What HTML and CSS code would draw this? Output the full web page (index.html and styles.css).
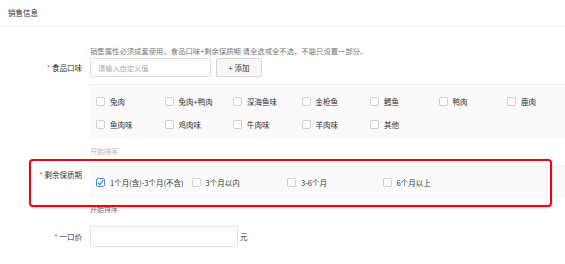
FILE: index.html
```html
<!DOCTYPE html>
<html>
<head>
    <title>销售信息</title>
    <link rel="stylesheet" href="styles.css">
</head>
<body>

<div class="page">
    <div class="section-title">销售信息</div>

    <div class="form">
        <div class="tip">销售属性必须成套使用，食品口味+剩余保质期 请全选或全不选，不能只设置一部分。</div>

        <div class="form-row row-flavor">
            <div class="label"><span class="req">*</span> 食品口味</div>
            <div class="field">
                <input class="text-input custom-input" type="text" placeholder="请输入自定义值">
                <button class="add-button" type="button">+ 添加</button>
            </div>
        </div>

        <div class="option-panel flavor-panel">
            <label class="check"><span class="box"></span>兔肉</label>
            <label class="check"><span class="box"></span>兔肉+鸭肉</label>
            <label class="check"><span class="box"></span>深海鱼味</label>
            <label class="check"><span class="box"></span>金枪鱼</label>
            <label class="check"><span class="box"></span>鳕鱼</label>
            <label class="check"><span class="box"></span>鸭肉</label>
            <label class="check"><span class="box"></span>鹿肉</label>
            <label class="check"><span class="box"></span>鱼肉味</label>
            <label class="check"><span class="box"></span>鸡肉味</label>
            <label class="check"><span class="box"></span>牛肉味</label>
            <label class="check"><span class="box"></span>羊肉味</label>
            <label class="check"><span class="box"></span>其他</label>
        </div>

        <div class="sort-link light">开始排序</div>

        <div class="form-row row-shelf">
            <div class="label"><span class="req">*</span> 剩余保质期</div>
            <div class="option-panel shelf-panel">
                <label class="check checked">
                    <span class="box">
                        <svg width="9" height="9" viewBox="0 0 9 9"><path d="M1.8 4.6 L3.7 6.6 L7.4 2.2" fill="none" stroke="#2b7fd6" stroke-width="1.1"/></svg>
                    </span>1个月(含)-3个月(不含)
                </label>
                <label class="check"><span class="box"></span>3个月以内</label>
                <label class="check"><span class="box"></span>3-6个月</label>
                <label class="check"><span class="box"></span>6个月以上</label>
            </div>
        </div>

        <div class="sort-link">开始排序</div>

        <div class="form-row row-price">
            <div class="label"><span class="req">*</span> 一口价</div>
            <div class="field">
                <input class="text-input price-input" type="text">
                <span class="unit">元</span>
            </div>
        </div>
    </div>

    <!-- annotation box -->
    <div class="highlight"></div>
</div>

</body>
</html>
```

FILE: styles.css
```css
body {
    margin: 0;
    font-family: "Noto Sans CJK SC", "Noto Sans", sans-serif;
    font-size: 7.5px;
    color: #333;
    background: #fff;
}

.page {
    position: relative;
    width: 565px;
    height: 264px;
    overflow: hidden;
}

.section-title {
    height: 26px;
    line-height: 26px;
    padding-left: 8px;
    border-bottom: 1px solid #f2f2f2;
    box-sizing: border-box;
    color: #333;
}

.form {
    display: flex;
    flex-direction: column;
}

.tip {
    margin: 20px 0 0 90px;
    line-height: 10px;
    font-size: 7.35px;
    color: #777;
}

.form-row {
    display: flex;
}

.label {
    width: 90px;
    flex: none;
    box-sizing: border-box;
    padding-right: 8px;
    text-align: right;
    line-height: 10px;
    color: #333;
}

.req {
    color: #e4393c;
}

.field {
    display: flex;
    align-items: center;
}

.row-flavor {
    margin-top: 2px;
    align-items: center;
}

.text-input {
    box-sizing: border-box;
    height: 19px;
    border: 1px solid #dcdcdc;
    border-radius: 1px;
    padding: 0 7px;
    font-family: inherit;
    font-size: 7.2px;
    color: #333;
    outline: none;
}

.text-input::placeholder {
    color: #aaa;
}

.custom-input {
    width: 121px;
}

.add-button {
    box-sizing: border-box;
    width: 46px;
    height: 19px;
    margin-left: 5px;
    border: 1px solid #d6d6d6;
    border-radius: 2px;
    background: #f7f7f7;
    font-family: inherit;
    font-size: 7.5px;
    color: #333;
    padding: 0;
}

.option-panel {
    display: grid;
    background: #fafafa;
    border-top: 1px solid #eeeeee;
    box-sizing: border-box;
}

.flavor-panel {
    margin: 7px 0 0 90px;
    height: 55px;
    padding: 9px 0 0 6px;
    grid-template-columns: repeat(7, 68.5px);
    row-gap: 9px;
    grid-auto-rows: 14px;
}

.check {
    display: flex;
    align-items: center;
    white-space: nowrap;
    color: #333;
}

.box {
    width: 9px;
    height: 9px;
    flex: none;
    box-sizing: border-box;
    border: 1px solid #cfcfcf;
    border-radius: 2px;
    background: #fff;
    margin-right: 5px;
    position: relative;
}

.check.checked .box {
    border-color: #4a90d9;
}

.check.checked svg {
    position: absolute;
    left: -1px;
    top: -1px;
}

.sort-link {
    margin-left: 90px;
    line-height: 10px;
    font-size: 7px;
    color: #6f6f6f;
}

.sort-link.light {
    margin-top: 7px;
    color: #b5b5b5;
}

.row-shelf {
    margin-top: 10px;
}

.row-shelf .label {
    padding-top: 4px;
}

.shelf-panel {
    flex: 1;
    height: 32px;
    padding-left: 6px;
    grid-template-columns: repeat(4, 95.5px);
    align-items: center;
}

.row-shelf + .sort-link {
    margin-top: 6px;
}

.row-price {
    margin-top: 12px;
    align-items: center;
}

.price-input {
    width: 148px;
    height: 21px;
    border-color: #e2e2e2;
}

.unit {
    margin-left: 2px;
}

.highlight {
    position: absolute;
    left: 29px;
    top: 159px;
    width: 523px;
    height: 48px;
    box-sizing: border-box;
    border: 2px solid #e5061c;
    border-radius: 4px;
    box-shadow: 0 1px 2px rgba(120, 0, 0, 0.25);
}
```
